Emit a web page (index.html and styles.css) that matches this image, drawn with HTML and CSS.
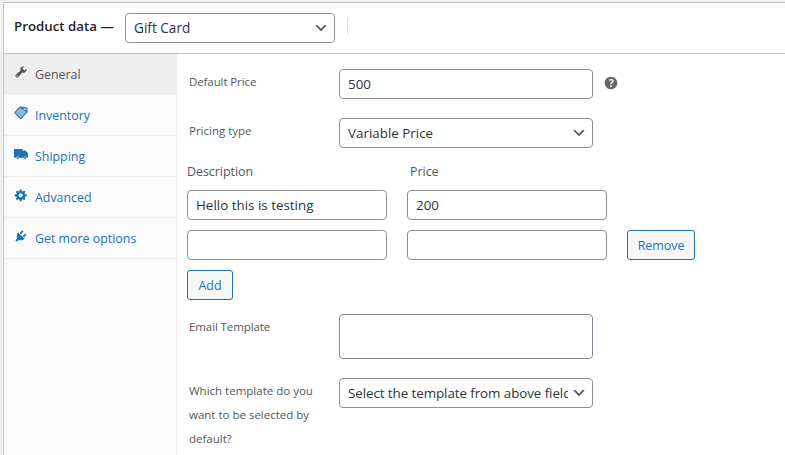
FILE: index.html
```html
<!DOCTYPE html>
<html lang="en">
<head>
<meta charset="utf-8">
<title>Product data</title>
<link rel="stylesheet" href="styles.css">
</head>
<body>
<section class="postbox">
  <header class="postbox-header">
    <h2 class="title">Product data —</h2>
    <div class="select type-select"><span class="select-text">Gift Card</span><svg class="chevron" viewBox="0 0 20 20"><path d="M5 6l5 5 5-5 2 1-7 7-7-7 2-1z"/></svg></div>
    <span class="divider"></span>
  </header>
  <div class="panel-wrap">
    <nav class="tabs">
      <a class="tab active"><svg class="icon" viewBox="0 0 20 20"><path d="M16.68 9.77c-1.34 1.34-3.3 1.67-4.95.99l-5.41 6.52c-.99.99-2.59.99-3.58 0s-.99-2.59 0-3.57l6.52-5.42c-.68-1.65-.35-3.61.99-4.95 1.28-1.28 3.12-1.62 4.72-1.06l-2.89 2.89 2.82 2.82 2.86-2.87c.53 1.58.18 3.39-1.08 4.65zM3.81 16.21c.4.39 1.04.39 1.43 0 .4-.4.4-1.04 0-1.43-.39-.4-1.03-.4-1.43 0-.39.39-.39 1.03 0 1.43z"/></svg><span>General</span></a>
      <a class="tab"><svg class="icon" viewBox="0 0 20 20"><path class="tag-fill" d="M.8 9.5L9.5.8l8.8 7-8.6 10.6z"/><path class="tag-line" d="M.9 9.5L9.5.9M.9 9.5l8.8 8.8 9.1-10-.5-5.5-6-.8-2 2.3M10 1l8 7"/><circle class="tag-hole" cx="14.8" cy="4.4" r="1.5"/></svg><span>Inventory</span></a>
      <a class="tab"><svg class="icon" viewBox="0 0 20 20"><path d="M0 3h12v2h4.2L20 9v6.5h-2.2a2 2 0 0 0-4 0H7.2a2 2 0 0 0-4 0H0z"/><circle cx="5.2" cy="15.7" r="1.5"/><circle cx="15.8" cy="15.7" r="1.5"/></svg><span>Shipping</span></a>
      <a class="tab"><svg class="icon" viewBox="0 0 20 20"><path d="M18 12h-2.18c-.17.7-.44 1.35-.81 1.93l1.54 1.54-2.1 2.1-1.54-1.54c-.58.36-1.23.63-1.91.79V19H8v-2.18c-.68-.16-1.33-.43-1.91-.79l-1.54 1.54-2.12-2.12 1.54-1.54c-.36-.58-.63-1.23-.79-1.91H1V9.03h2.17c.16-.7.44-1.35.8-1.94L2.43 5.55l2.1-2.1 1.54 1.54c.58-.37 1.24-.64 1.93-.81V2h3v2.18c.68.16 1.33.43 1.91.79l1.54-1.54 2.12 2.12-1.54 1.54c.36.59.64 1.24.8 1.94H18V12zm-8.5 1.5c1.66 0 3-1.34 3-3s-1.34-3-3-3-3 1.34-3 3 1.34 3 3 3z"/></svg><span>Advanced</span></a>
      <a class="tab"><svg class="icon" viewBox="0 0 20 20"><path d="M13.11 4.36L9.87 7.6 8 5.73l3.24-3.24c.35-.34 1.05-.2 1.56.32.52.51.66 1.21.31 1.55zm-8 1.77l.91-1.12 9.01 9.01-1.19.84c-.71.71-2.63 1.16-3.82 1.16H6.14L4.9 17.26c-.59.59-1.54.59-2.12 0-.59-.58-.59-1.53 0-2.12l1.24-1.24v-3.88c0-1.13.4-3.19 1.09-3.89zm7.26 3.97l3.24-3.24c.34-.35 1.04-.21 1.55.31.52.51.66 1.21.31 1.55l-3.24 3.25z"/></svg><span>Get more options</span></a>
    </nav>
    <div class="panel">
      <div class="field">
        <label class="label tight">Default Price</label>
        <div class="control">500</div>
        <svg class="help" viewBox="0 0 20 20"><path d="M17 10c0-3.87-3.14-7-7-7-3.87 0-7 3.13-7 7s3.13 7 7 7c3.86 0 7-3.13 7-7zm-6.3 1.48H9.14v-.43c0-.38.08-.7.24-.98s.46-.57.88-.89c.41-.29.68-.53.81-.71.14-.18.2-.39.2-.62 0-.25-.09-.44-.28-.58-.19-.13-.45-.19-.79-.19-.58 0-1.25.19-2 .57l-.64-1.28c.87-.49 1.8-.74 2.77-.74.81 0 1.45.2 1.92.58.48.39.71.91.71 1.55 0 .43-.09.8-.29 1.11-.19.32-.57.67-1.11 1.06-.38.28-.61.49-.71.63-.1.15-.15.34-.15.57v.35zm-1.47 2.74c-.18-.17-.27-.42-.27-.73 0-.33.08-.58.26-.75s.43-.25.77-.25c.32 0 .57.09.75.26s.27.42.27.74c0 .3-.09.55-.27.72-.18.18-.43.27-.75.27-.33 0-.58-.09-.76-.26z"/></svg>
      </div>
      <div class="field pricing">
        <label class="label">Pricing type</label>
        <div class="select"><span class="select-text">Variable Price</span><svg class="chevron" viewBox="0 0 20 20"><path d="M5 6l5 5 5-5 2 1-7 7-7-7 2-1z"/></svg></div>
      </div>
      <div class="price-table">
        <div class="heading">Description</div>
        <div class="heading price-heading">Price</div>
        <div class="control first">Hello this is testing</div>
        <div class="control">200</div>
        <div class="control first"></div>
        <div class="control"></div>
        <button class="button">Remove</button>
        <button class="button add first">Add</button>
      </div>
      <div class="field email">
        <label class="label tight">Email Template</label>
        <div class="control area"></div>
      </div>
      <div class="field template">
        <label class="label">Which template do you<br>want to be selected by<br>default?</label>
        <div class="select"><span class="select-text long">Select the template from above field</span><svg class="chevron" viewBox="0 0 20 20"><path d="M5 6l5 5 5-5 2 1-7 7-7-7 2-1z"/></svg></div>
      </div>
    </div>
  </div>
</section>
</body>
</html>
```
FILE: styles.css
```css
* { box-sizing: border-box; }
html, body { height: 100%; }
body {
  margin: 0;
  overflow: hidden;
  background: #f0f0f1;
  font-family: "Open Sans", "Noto Sans", sans-serif;
  font-size: 12.4px;
  color: #50575e;
  padding: 2px 0 0 3px;
}
span, .label, .control { white-space: nowrap; }
.postbox {
  height: 470px;
  background: #fff;
  border: 1px solid #c3c4c7;
  border-right: 0;
  display: flex;
  flex-direction: column;
}
.postbox-header {
  height: 51px;
  flex: none;
  display: flex;
  align-items: flex-start;
  border-bottom: 1px solid #c3c4c7;
  padding: 10px 0 0 10px;
}
.title {
  margin: 3px 0 0;
  width: 111px;
  font-size: 13.3px;
  line-height: 20px;
  font-weight: 600;
  color: #1d2327;
}
.divider { width: 1px; height: 16px; margin: 5px 0 0 12px; background: #dcdcde; }
.control, .select {
  width: 254px;
  height: 30px;
  border: 1px solid #8c8f94;
  border-radius: 4px;
  background: #fff;
  display: flex;
  align-items: center;
  padding: 0 8px;
  font-size: 13.4px;
  color: #2c3338;
}
.select { padding-right: 5px; flex: none; }
.select-text { flex: 1; overflow: hidden; line-height: 24px; margin-right: 3px; }
.long { letter-spacing: -0.08px; }
.chevron { width: 16px; height: 16px; flex: none; fill: #555; }
.type-select { width: 210px; font-weight: 500; font-size: 13.6px; }
.panel-wrap { flex: 1; display: flex; min-height: 0; }
.tabs { width: 173px; background: #fafafa; border-right: 1px solid #eee; }
.tab {
  height: 41px;
  display: flex;
  align-items: flex-start;
  gap: 7px;
  padding: 11px 0 0 10px;
  border-bottom: 1px solid #eee;
  color: #2271b1;
  fill: #2271b1;
  line-height: 20px;
}
.active { background: #eee; color: #555; fill: #555; }
.icon { width: 14px; height: 14px; flex: none; }
.tag-fill { fill: #8ab7db; }
.tag-line { fill: none; stroke: #2271b1; stroke-width: 1.6; }
.tag-hole { fill: #fafafa; stroke: #2271b1; stroke-width: 1; }
.panel { flex: 1; padding: 15px 0 0 12px; }
.field { display: flex; align-items: flex-start; height: 49px; }
.label { width: 150px; line-height: 24px; padding-top: 1px; font-size: 11.5px; flex: none; }
.tight { letter-spacing: -0.1px; }
.help { width: 18px; height: 18px; margin: 5px 0 0 9px; fill: #666; }
.pricing { height: 41px; }
.price-table {
  display: grid;
  grid-template-columns: 200px 200px 68px;
  grid-template-rows: 21px 30px 30px 30px;
  row-gap: 10px;
  column-gap: 20px;
  margin-left: -2px;
}
.price-table .control { width: 200px; }
.heading { line-height: 22px; padding-top: 2px; height: 21px; }
.price-heading { padding-left: 3px; }
.first { grid-column: 1; }
.button {
  border: 1px solid #2271b1;
  border-radius: 3px;
  background: #f6f7f7;
  color: #2271b1;
  font-family: inherit;
  font-size: 12.4px;
  padding: 0;
  height: 30px;
}
.add { width: 46px; }
.email { margin-top: 14px; height: 64px; }
.area { height: 45px; border-color: #7e8993; }
```
